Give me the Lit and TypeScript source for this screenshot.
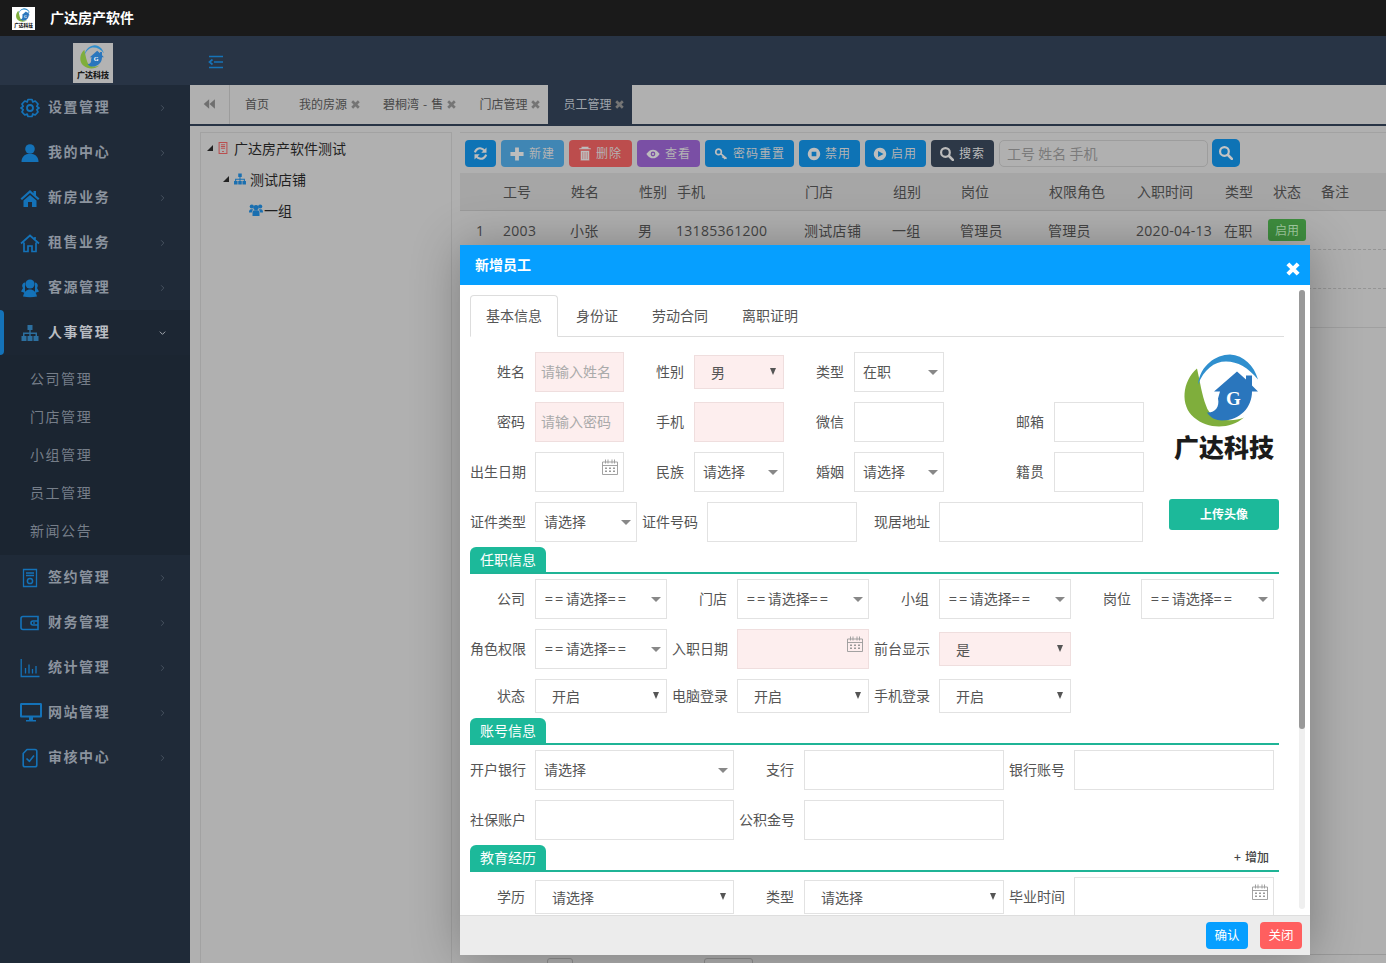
import { LitElement, html, css, svg } from "lit";
import { customElement } from "lit/decorators.js";

const logo = () => html`<svg class="logo-svg" viewBox="0 0 100 112">
  <path d="M23 15C8 28 6 52 20 64C34 76 56 76 70 64C55 70 36 66 32 52C28 42 26 28 23 15Z" fill="#7fae3c"/>
  <path d="M24 31C26 12 42 1 56 1C70 2 80 12 84 26C74 14 64 8 52 8C40 8 30 16 24 31Z" fill="#2f8fce"/>
  <path d="M63 18L72 26V22H78V32L84 38H78C78 54 66 67 48 67C42 67 36 64 33 59C40 60 46 54 44 45L46 38H40Z" fill="#2a76bd"/>
  <text x="52" y="51" class="logo-g">G</text>
  <text x="50" y="103" class="logo-t">广达科技</text>
</svg>`;

const I = (p: unknown, vb = "0 0 20 20") => html`<svg class="ic" viewBox=${vb}>${p}</svg>`;

const icons: Record<string, unknown> = {
  gear: svg`<path d="M8 1.5H12L12.8 4L15.2 3L18 6L16.8 8.4L19 10L16.8 11.6L18 14L15.2 17L12.8 16L12 18.5H8L7.2 16L4.8 17L2 14L3.2 11.6L1 10L3.2 8.4L2 6L4.8 3L7.2 4Z" fill="none" stroke="currentColor" stroke-width="1.7" stroke-linejoin="round"/><circle cx="10" cy="10" r="3" fill="none" stroke="currentColor" stroke-width="1.8"/>`,
  user: svg`<circle cx="10" cy="6" r="4.8" fill="currentColor"/><path d="M1.5 19C1.5 13.5 5 11.5 7.5 11H12.5C15 11.5 18.5 13.5 18.5 19Z" fill="currentColor"/>`,
  home: svg`<path d="M10 2L.5 10.5L2 12L10 5L18 12L19.5 10.5L16 7.5V3H13.5V5.3Z" fill="currentColor"/><path d="M3.5 12.5L10 7L16.5 12.5V19H12V14H8V19H3.5Z" fill="currentColor"/>`,
  homeo: svg`<path d="M1 10.5L10 2.5L19 10.5M15 4V7M4 9.5V18.5H8V13H12V18.5H16V9.5" fill="none" stroke="currentColor" stroke-width="1.7"/>`,
  users: svg`<circle cx="10" cy="6" r="4.6" fill="currentColor"/><path d="M5 4.5C2 5 1.5 8 3 10L1 13.5L5 15ZM15 4.5C18 5 18.5 8 17 10L19 13.5L15 15Z" fill="currentColor"/><path d="M3 18.5C4 14 6.5 11.5 10 11.5C13.5 11.5 16 14 17 18.5C12 19.5 8 19.5 3 18.5Z" fill="currentColor"/>`,
  group: svg`<circle cx="4" cy="5" r="3" fill="currentColor"/><circle cx="16" cy="5" r="3" fill="currentColor"/><circle cx="10" cy="6.5" r="3.8" fill="currentColor"/><path d="M0 13.5C0 9.5 2 9 4 9C4.8 9 5.4 9.2 6 9.6C4.8 10.6 4.3 11.8 4.1 13.5ZM20 13.5C20 9.5 18 9 16 9C15.2 9 14.6 9.2 14 9.6C15.2 10.6 15.7 11.8 15.9 13.5ZM5 18.5V13.5C5 11.5 6.5 10.5 8 10.5H12C13.5 10.5 15 11.5 15 13.5V18.5Z" fill="currentColor"/>`,
  tree: svg`<path d="M7.5 2H12.5V7H10.7V9.5H17V13H18.5V18H13.5V13H15.5V11H10.7V13H12.5V18H7.5V13H9.3V11H4.5V13H6.5V18H1.5V13H3V9.5H9.3V7H7.5Z" fill="currentColor"/>`,
  doc: svg`<path d="M3.5 1.5H16.5V18.5H3.5ZM6 5H14M6 7.5H14" fill="none" stroke="currentColor" stroke-width="1.3"/><circle cx="10" cy="13" r="2.6" fill="none" stroke="currentColor" stroke-width="1.5"/>`,
  wallet: svg`<path d="M3 3.5H18V16.5H3C1.8 16.5 1 15.7 1 14.5V5.5C1 4.3 1.8 3.5 3 3.5ZM18.5 8H13C11.5 8 11 9 11 10C11 11 11.5 12 13 12H18.5" fill="none" stroke="currentColor" stroke-width="1.6"/><circle cx="14" cy="10" r=".9" fill="currentColor"/>`,
  bars: svg`<path d="M1.2 1V18.5H19.5M5.5 10V15.5M9 6.5V15.5M12.5 11V15.5M16 8V15.5" fill="none" stroke="currentColor" stroke-width="1.3"/>`,
  monitor: svg`<path d="M2.5 2H21.5C22.5 2 23 2.5 23 3.5V15C23 16 22.5 16.5 21.5 16.5H2.5C1.5 16.5 1 16 1 15V3.5C1 2.5 1.5 2 2.5 2ZM3 4V14.5H21V4ZM10 16.5H14V19H17V20.5H7V19H10Z" fill="currentColor" fill-rule="evenodd"/>`,
  check: svg`<path d="M7 1.5H15C16 1.5 16.8 2.3 16.8 3.3V17C16.8 18 16 18.8 15 18.8H5C4 18.8 3.2 18 3.2 17V5.5ZM6.5 10.5L9.5 13.3L14 7.5" fill="none" stroke="currentColor" stroke-width="1.6" stroke-linejoin="round"/>`,
  sync: svg`<path d="M2.5 8.5C3.5 4.5 7.5 2.2 11 3.2C13 3.7 14.3 4.8 15.4 6.2M17.5 11.5C16.5 15.5 12.5 17.8 9 16.8C7 16.3 5.7 15.2 4.6 13.8" fill="none" stroke="currentColor" stroke-width="2.8"/><path d="M18 2V9H11ZM2 18V11H9Z" fill="currentColor"/>`,
  plus: svg`<path d="M7.8 2.5H12.2V7.8H17.5V12.2H12.2V17.5H7.8V12.2H2.5V7.8H7.8Z" fill="currentColor"/>`,
  trash: svg`<path d="M3 .5H13V2.5H16V4.5H0V2.5H3ZM2 6H14V19.5H2ZM5 8V17.5M8 8V17.5M11 8V17.5" fill="currentColor" stroke="#bb4d4d" stroke-width=".7"/>`,
  eye: svg`<path d="M0.5 10C4 5 7 3.8 10 3.8C13 3.8 16 5 19.5 10C16 15 13 16.2 10 16.2C7 16.2 4 15 .5 10Z" fill="currentColor"/><circle cx="10" cy="10" r="3.4" fill="#7a4fa5"/><circle cx="10" cy="10" r="1.6" fill="currentColor"/>`,
  key: svg`<circle cx="6.5" cy="7" r="4" fill="none" stroke="currentColor" stroke-width="2.4"/><path d="M9.5 9.5L18 16.5M13.5 13L11.8 15M16 15L14.4 17" fill="none" stroke="currentColor" stroke-width="2.2"/>`,
  stop: svg`<path fill-rule="evenodd" d="M10 2A8 8 0 1 1 9.99 2ZM7 7V13H13V7Z" fill="currentColor"/>`,
  play: svg`<path fill-rule="evenodd" d="M10 2A8 8 0 1 1 9.99 2ZM7.5 6V14L14.5 10Z" fill="currentColor"/>`,
  search: svg`<circle cx="8" cy="8" r="5.6" fill="none" stroke="currentColor" stroke-width="2.8"/><path d="M12.5 12.5L17.5 17.5" stroke="currentColor" stroke-width="3.4" stroke-linecap="round"/>`,
  building: svg`<path d="M3.5 1H16.5V19H3.5ZM6.5 4.5H13.5M6.5 7.5H13.5M6.5 10.5H13.5M8.5 16H11.5" fill="none" stroke="currentColor" stroke-width="1.7"/>`,
  back: svg`<path d="M9.5 3.5V16.5L2 10ZM17.5 3.5V16.5L10 10Z" fill="currentColor"/>`,
  menu: svg`<path d="M1 2.5H15M6 8H15M1 13.5H15M4.5 5.5L1.5 8L4.5 10.5" fill="none" stroke="currentColor" stroke-width="1.7"/>`,
  cal: svg`<path d="M.5 3H15.5V15.5H.5ZM.5 6.5H15.5M3.5 .5V4.5M6 .5V4.5M10 .5V4.5M12.5 .5V4.5" fill="none" stroke="currentColor" stroke-width=".9"/><path d="M3 8.5H5V10H3ZM7 8.5H9V10H7ZM11 8.5H13V10H11ZM3 11.5H5V13H3ZM7 11.5H9V13H7ZM11 11.5H13V13H11Z" fill="currentColor"/>`,
  x: svg`<path d="M4.5 4.5L15.5 15.5M15.5 4.5L4.5 15.5" stroke="currentColor" stroke-width="4.4"/>`,
  chev: svg`<path d="M7 4L13 10L7 16" fill="none" stroke="currentColor" stroke-width="1.8"/>`,
  chevd: svg`<path d="M4 7L10 13L16 7" fill="none" stroke="currentColor" stroke-width="2.2"/>`,
};
const vbs: Record<string, string> = { plus: "2 2 16 16", stop: "1 1 18 18", play: "1 1 18 18", search: "1 1 18 18", x: "2.5 2.5 15 15", trash: "0 0 16 20" };

const before = [
  ["gear", "设置管理"], ["user", "我的中心"], ["home", "新房业务"], ["homeo", "租售业务"], ["users", "客源管理"],
];
const after = [
  ["doc", "签约管理"], ["wallet", "财务管理"], ["bars", "统计管理"], ["monitor", "网站管理"], ["check", "审核中心"],
];
const subs = ["公司管理", "门店管理", "小组管理", "员工管理", "新闻公告"];
const tabs = ["我的房源", "碧桐湾 - 售", "门店管理"];
const tools: [string, string, string][] = [
  ["plus", "新建", "b-lblue"], ["trash", "删除", "b-red del"], ["eye", "查看", "b-purple"], ["key", "密码重置", "b-blue"],
  ["stop", "禁用", "b-blue tight"], ["play", "启用", "b-blue tight"], ["search", "搜索", "b-dark"],
];
const cols: [string, number][] = [
  ["", 43], ["工号", 68], ["姓名", 68], ["性别", 38], ["手机", 128], ["门店", 88], ["组别", 68], ["岗位", 88],
  ["权限角色", 88], ["入职时间", 88], ["类型", 48], ["状态", 48], ["备注", 60],
];
const rowVals = ["1", "2003", "小张", "男", "13185361200", "测试店铺", "一组", "管理员", "管理员", "2020-04-13", "在职"];
const rowCols = [43, 67, 68, 38, 128, 88, 68, 88, 88, 88, 48];

type F = { l: string; lw: number; w: number; t: string; v?: string; ph?: string; pink?: boolean };
const f = (l: string, lw: number, w: number, t: string, v = "", pink = false, ph = ""): F => ({ l, lw, w, t, v, pink, ph });

const rowsA: F[][] = [
  [f("姓名", 65, 89, "i", "", true, "请输入姓名"), f("性别", 70, 90, "n", "男", true), f("类型", 70, 90, "c", "在职")],
  [f("密码", 65, 89, "i", "", true, "请输入密码"), f("手机", 70, 90, "i", "", true), f("微信", 70, 90, "i"), f("邮箱", 110, 90, "i")],
  [f("出生日期", 65, 89, "d"), f("民族", 70, 90, "c", "请选择"), f("婚姻", 70, 90, "c", "请选择"), f("籍贯", 110, 90, "i")],
  [f("证件类型", 65, 102, "c", "请选择"), f("证件号码", 70, 150, "i"), f("现居地址", 82, 204, "i")],
];

const sel = "==";
const rowsB: F[][] = [
  [f("公司", 65, 132, "c", sel), f("门店", 70, 132, "c", sel), f("小组", 70, 132, "c", sel), f("岗位", 70, 133, "c", sel)],
  [f("角色权限", 65, 132, "c", sel), f("入职日期", 70, 132, "d", "", true), f("前台显示", 70, 132, "n", "是", true)],
  [f("状态", 65, 132, "n", "开启"), f("电脑登录", 70, 132, "n", "开启"), f("手机登录", 70, 132, "n", "开启")],
];
const rowsC: F[][] = [
  [f("开户银行", 65, 199, "c", "请选择"), f("支行", 70, 200, "i"), f("银行账号", 70, 200, "i")],
  [f("社保账户", 65, 199, "i"), f("公积金号", 70, 200, "i")],
];
const rowsD: F[][] = [
  [f("学历", 65, 199, "n", "请选择"), f("类型", 70, 200, "n", "请选择"), f("毕业时间", 70, 200, "d")],
];

@customElement("app-root")
export class AppRoot extends LitElement {
  static styles = css`
    :host { display: block; position: relative; width: 1386px; height: 963px; overflow: hidden; font-family: "Noto Sans CJK SC", "Liberation Sans", sans-serif; font-size: 14px; color: #444; background: #b0b0b0; }
    * { box-sizing: border-box; }
    .ic { display: block; width: 100%; height: 100%; }
    .logo-svg { display: block; width: 100%; height: 100%; }
    .logo-g { font-family: "Liberation Serif", serif; font-weight: 700; font-size: 19px; fill: #fff; }
    .logo-t { font-family: "Noto Sans CJK SC", sans-serif; font-weight: 900; font-size: 25px; text-anchor: middle; fill: #1b1b1b; }
    .top { height: 36px; background: #1a1a1a; display: flex; align-items: center; padding-left: 12px; }
    .top-logo { width: 23px; height: 23px; background: #fff; margin-right: 15px; padding: 1px; }
    .top-title { color: #fff; font-weight: 700; font-size: 14px; line-height: 34px; height: 36px; }
    .head { height: 49px; background: #283445; display: flex; align-items: center; }
    .head-side { width: 190px; display: flex; justify-content: center; padding: 4px 4px 0 0; }
    .head-logo { width: 40px; height: 40px; background: #b3b3b3; padding: 2px; }
    .burger { width: 16px; height: 16px; margin: 2px 0 0 18px; color: #1673b8; }
    .body { display: flex; height: 878px; }
    .side { width: 190px; background: #1f2a38; flex: none; }
    .item { height: 45px; display: flex; align-items: center; padding-left: 20px; color: #8b939e; font-weight: 700; letter-spacing: 1.55px; position: relative; }
    .item .icon { width: 20px; height: 20px; color: #1472b8; margin-right: 8px; flex: none; }
    .item .icon.wide { width: 24px; height: 24px; margin-left: -1px; margin-right: 5px; }
    .item .label { flex: 1; padding-bottom: 4px; }
    .item .chev { width: 9px; height: 10px; margin-right: 23px; color: #4f5a68; }
    .item.active { background: #1c2633; color: #b9bdc3; }
    .item.active::before { content: ""; position: absolute; left: 0; top: 0; bottom: 0; width: 4px; background: #1472b8; border-radius: 0 4px 4px 0; }
    .item.active .chev { color: #a5aab1; }
    .item.active .icon { color: #2c6f9f; }
    .sub { background: #1b2531; padding: 5px 0; height: 200px; }
    .sub div { height: 38px; line-height: 36px; padding-left: 30px; color: #767e89; letter-spacing: 1.55px; }
    .main { flex: 1; display: flex; flex-direction: column; min-width: 0; }
    .tabs { height: 41px; display: flex; border-bottom: 2px solid #283445; flex: none; font-size: 12px; color: #484848; }
    .back { width: 40px; border-right: 1px solid #9c9c9c; padding: 0 13px 2px 13px; color: #6f6f6f; display: flex; align-items: center; }
    .back .ic { height: 16px; }
    .tab { display: flex; align-items: center; padding: 0 8px 0 15px; white-space: nowrap; }
    .tab.first { padding: 0 15px; }
    .tab .nm { word-spacing: 1.4px; padding-bottom: 2px; }
    .tab .cl { width: 9px; height: 9px; margin-left: 4px; margin-top: -1px; color: #757575; }
    .tab.on { background: #283445; color: #9fa4ab; }
    .cols { flex: 1; display: flex; padding: 6px 0 0 10px; gap: 8px; min-height: 0; }
    .tree { width: 252px; flex: none; border: 1px solid #a2a2a2; border-bottom: none; color: #1f1f1f; }
    .tn { height: 31px; display: flex; align-items: center; white-space: nowrap; padding-bottom: 2px; }
    .caret { width: 0; height: 0; border-style: solid; border-width: 0 0 6px 6px; border-color: transparent transparent #222 transparent; margin-right: 4px; }
    .tn .i { width: 14px; height: 14px; margin-right: 3px; color: #1a6fb0; }
    .tn .i.red { color: #b94f4f; margin-right: 5px; width: 12px; height: 14px; }
    .right { flex: 1; display: flex; flex-direction: column; border-top: 1px solid #a2a2a2; min-width: 0; }
    .bar { display: flex; gap: 5px; margin: 7px 0 6px 5px; height: 27px; }
    .btn { height: 27px; border-radius: 4px; display: flex; align-items: center; padding: 0 9px 2px; color: #b4b4b4; font-size: 12px; letter-spacing: 1px; flex: none; white-space: nowrap; }
    .btn .bi { width: 14px; height: 14px; margin: 2px 5px 0 0; color: #bdbdbd; flex: none; }
    .btn.tight { padding-left: 8px; }
    .btn.tight .bi { margin-right: 4px; }
    .btn.del { padding: 0 10px 2px; }
    .btn.del .bi { width: 12px; height: 15px; }
    .b-blue { background: #0e73b5; }
    .b-lblue { background: #4086b4; }
    .b-red { background: #bc4d4d; }
    .b-purple { background: #7a4fa5; }
    .b-dark { background: #2d3847; }
    .b-dark, .b-dark .bi { color: #bcbcbc; }
    .btn.sq { width: 31px; padding: 0 8px; }
    .btn.sq .bi { margin: 0; width: 15px; height: 15px; }
    .sinput { width: 209px; height: 27px; border: 1px solid #9d9d9d; border-radius: 5px; padding: 0 7px; line-height: 24px; color: #7b7b7b; flex: none; }
    .sbtn { width: 28px; height: 28px; margin: -1px 0 0 -1px; border-radius: 5px; background: #0e73b5; color: #c4c4c4; padding: 7px; flex: none; }
    .trow { display: flex; align-items: center; }
    .trow > div { flex: none; white-space: nowrap; }
    .thead { height: 38px; background: #a6a6a6; border-bottom: 1px solid #9a9a9a; padding-bottom: 2px; }
    .tr { height: 39px; border-bottom: 1px dashed #959595; font-family: "Open Sans", "Noto Sans CJK SC", sans-serif; letter-spacing: .3px; color: #454545; }
    .tr.last { border-bottom: 1px solid #a0a0a0; }
    .tr .c0 { padding-left: 16px; }
    .badge { width: 38px; height: 22px; background: #3f8f3f; color: #a2cda2; border-radius: 3px; font-size: 12px; line-height: 21px; text-align: center; margin-left: -4px; font-family: "Noto Sans CJK SC", sans-serif; letter-spacing: 0; }
    .fill { flex: 1; }
    .pager { height: 9px; border-top: 1px solid #9a9a9a; display: flex; padding: 3px 0 0 87px; }
    .pbox { height: 12px; border: 1px solid #8f8f8f; border-radius: 3px; }
    .pb1 { width: 26px; }
    .pb2 { width: 49px; margin-left: 131px; }
    .modal { position: absolute; left: 460px; top: 245px; width: 850px; height: 710px; background: #fff; display: flex; flex-direction: column; box-shadow: 1px 1px 50px rgba(0, 0, 0, .3); border-radius: 2px 2px 0 0; }
    .m-title { height: 40px; background: #069fff; color: #fff; font-weight: 700; padding-left: 15px; line-height: 38px; flex: none; position: relative; }
    .m-x { position: absolute; right: 10px; top: 17px; width: 14px; height: 14px; color: #fff; }
    .m-body { flex: 1; overflow: hidden; padding: 10px 0 0 10px; position: relative; }
    .mtabs { display: flex; width: 814px; height: 42px; border-bottom: 1px solid #ddd; margin-bottom: 15px; color: #555; }
    .mtabs div { padding: 0 15px; height: 42px; line-height: 39px; margin-right: 2px; border: 1px solid transparent; white-space: nowrap; }
    .mtabs div.cur { border-color: #ddd; border-bottom-color: #fff; border-radius: 4px 4px 0 0; }
    .top-form { display: flex; }
    .side-photo { margin-left: 25px; width: 110px; display: flex; flex-direction: column; align-items: center; }
    .photo { width: 100px; height: 113px; margin: 1px 0 33px; }
    .upload { width: 110px; height: 31px; background: #1cb99a; border-radius: 3px; color: #fff; font-size: 12px; font-weight: 700; text-align: center; line-height: 29px; }
    .row { display: flex; align-items: center; margin-bottom: 10px; min-height: 34px; }
    .fld { display: flex; align-items: center; flex: none; }
    .lab { text-align: right; padding: 0 10px 2px 0; white-space: nowrap; color: #555; flex: none; }
    .lab.four { padding-right: 9px; }
    .ctl { border: 1px solid #e2e2e2; height: 40px; position: relative; line-height: 36px; color: #555; flex: none; background: #fff; }
    .ctl.pink { background: #fdeeee; border-color: #efdede; }
    .ctl input { width: 100%; height: 100%; border: 0; outline: 0; background: transparent; padding: 0 5px 2px; font: inherit; color: inherit; display: block; }
    .ctl input::placeholder { color: #aaa; opacity: 1; }
    .ctl.c { padding-left: 8px; }
    .ctl.c::after { content: ""; position: absolute; right: 5px; top: 17px; border-style: solid; border-width: 5px 5px 0 5px; border-color: #888 transparent transparent transparent; }
    .ctl.n { height: 34px; line-height: 32px; padding-left: 16px; }
    .ctl.n::after { content: ""; position: absolute; right: 7px; top: 12px; border-style: solid; border-width: 7px 3.5px 0 3.5px; border-color: #555 transparent transparent transparent; }
    .eq { letter-spacing: 2.6px; margin-left: 1px; }
    .eq + .eq { margin-left: 0; }
    .cal { position: absolute; right: 5px; top: 6px; width: 16px; height: 16px; color: #999; }
    .sec { height: 27px; width: 809px; border-bottom: 2px solid #1fb496; margin: -5px 0 5px; display: flex; justify-content: space-between; }
    .sec b { width: 76px; height: 25px; background: #1cb99a; color: #fff; font-weight: 400; border-radius: 6px 6px 0 0; text-align: center; line-height: 25px; }
    .sec span { font-size: 12px; color: #444; padding-right: 10px; line-height: 24px; font-weight: 500; word-spacing: 1.5px; }
    .track { position: absolute; right: 5px; top: 5px; width: 6px; height: 619px; background: #efefef; border-radius: 3px; }
    .thumb { width: 6px; height: 439px; background: #999; border-radius: 3px; }
    .m-foot { height: 40px; background: #ececec; border-top: 1px solid #dedede; display: flex; justify-content: flex-end; gap: 12px; padding: 6px 8px 0 0; flex: none; }
    .m-foot div { width: 42px; height: 27px; border-radius: 4px; color: #fff; font-size: 12.5px; text-align: center; line-height: 25px; }
    .ok { background: #069fff; }
    .no { background: #ff5f5f; }
  `;

  private fld(x: F) {
    const cls = `ctl ${x.t} ${x.pink ? "pink" : ""}`;
    const value = x.v === sel ? html`<span class="eq">==</span>请选择<span class="eq">==</span>` : x.v;
    return html`<div class="fld">
      <div class="lab ${x.l.length === 4 ? "four" : ""}" style="width:${x.lw}px">${x.l}</div>
      <div class=${cls} style="width:${x.w}px">
        ${x.t === "i" ? html`<input placeholder=${x.ph ?? ""} />` : ""}
        ${x.t === "c" || x.t === "n" ? value : ""}
        ${x.t === "d" ? html`<input /><div class="cal">${I(icons.cal, "0 0 16 16")}</div>` : ""}
      </div>
    </div>`;
  }
  private rows(r: F[][]) {
    return r.map((fs) => html`<div class="row">${fs.map((x) => this.fld(x))}</div>`);
  }
  private item(it: string[], active = false) {
    const wide = it[0] === "monitor";
    return html`<div class="item ${active ? "active" : ""}">
      <div class="icon ${wide ? "wide" : ""}">${wide ? I(icons.monitor, "0 0 24 24") : I(icons[it[0]])}</div>
      <div class="label">${it[1]}</div>
      <div class="chev">${I(active ? icons.chevd : icons.chev)}</div>
    </div>`;
  }

  render() {
    return html`
      <div class="top">
        <div class="top-logo">${logo()}</div>
        <div class="top-title">广达房产软件</div>
      </div>
      <div class="head">
        <div class="head-side"><div class="head-logo">${logo()}</div></div>
        <div class="burger">${I(icons.menu, "0 0 16 16")}</div>
      </div>
      <div class="body">
        <div class="side">
          ${before.map((i) => this.item(i))}
          ${this.item(["tree", "人事管理"], true)}
          <div class="sub">${subs.map((s) => html`<div>${s}</div>`)}</div>
          ${after.map((i) => this.item(i))}
        </div>
        <div class="main">
          <div class="tabs">
            <div class="back">${I(icons.back, "1 3 18 14")}</div>
            <div class="tab first"><span class="nm">首页</span></div>
            ${tabs.map((t) => html`<div class="tab"><span class="nm">${t}</span><div class="cl">${I(icons.x, vbs.x)}</div></div>`)}
            <div class="tab on"><span class="nm">员工管理</span><div class="cl">${I(icons.x, vbs.x)}</div></div>
          </div>
          <div class="cols">
            <div class="tree">
              <div class="tn" style="padding-left:6px"><i class="caret"></i><div class="i red">${I(icons.building)}</div>广达房产软件测试</div>
              <div class="tn" style="padding-left:22px"><i class="caret"></i><div class="i">${I(icons.tree)}</div>测试店铺</div>
              <div class="tn" style="padding-left:48px"><div class="i" style="margin-right:1px">${I(icons.group)}</div>一组</div>
            </div>
            <div class="right">
              <div class="bar">
                <div class="btn sq b-blue"><div class="bi">${I(icons.sync)}</div></div>
                ${tools.map((t) => html`<div class="btn ${t[2]}"><div class="bi">${I(icons[t[0]], vbs[t[0]] ?? "0 0 20 20")}</div>${t[1]}</div>`)}
                <div class="sinput">工号 姓名 手机</div>
                <div class="sbtn">${I(icons.search, vbs.search)}</div>
              </div>
              <div class="trow thead">${cols.map((c) => html`<div style="width:${c[1]}px">${c[0]}</div>`)}</div>
              <div class="trow tr">
                ${rowVals.map((v, i) => html`<div class=${i === 0 ? "c0" : ""} style="width:${rowCols[i]}px">${v}</div>`)}
                <div class="badge">启用</div>
              </div>
              <div class="trow tr"></div>
              <div class="trow tr last"></div>
              <div class="fill"></div>
              <div class="pager"><div class="pbox pb1"></div><div class="pbox pb2"></div></div>
            </div>
          </div>
        </div>
      </div>
      <div class="modal">
        <div class="m-title">新增员工<div class="m-x">${I(icons.x, vbs.x)}</div></div>
        <div class="m-body">
          <div class="mtabs"><div class="cur">基本信息</div><div>身份证</div><div>劳动合同</div><div>离职证明</div></div>
          <div class="top-form">
            <div>${this.rows(rowsA)}</div>
            <div class="side-photo">
              <div class="photo">${logo()}</div>
              <div class="upload">上传头像</div>
            </div>
          </div>
          <div class="sec"><b>任职信息</b></div>
          ${this.rows(rowsB)}
          <div class="sec"><b>账号信息</b></div>
          ${this.rows(rowsC)}
          <div class="sec"><b>教育经历</b><span>+ 增加</span></div>
          ${this.rows(rowsD)}
          <div class="track"><div class="thumb"></div></div>
        </div>
        <div class="m-foot"><div class="ok">确认</div><div class="no">关闭</div></div>
      </div>
    `;
  }
}
